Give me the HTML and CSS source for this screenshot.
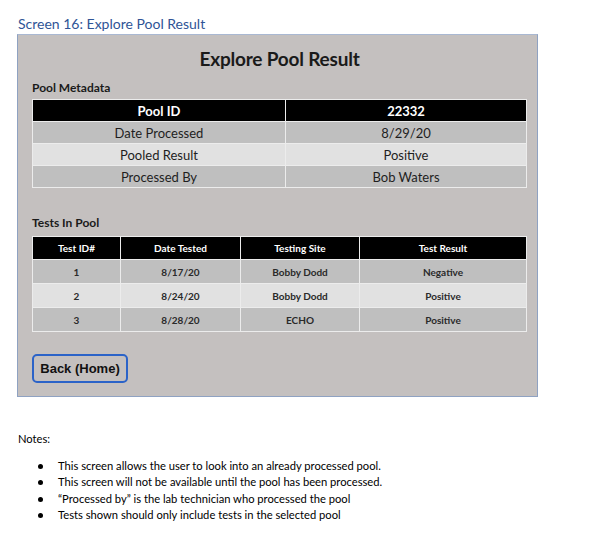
FILE: index.html
```html
<!DOCTYPE html>
<html>
<head>
<meta charset="utf-8">
<link rel="stylesheet" href="styles.css">
</head>
<body>
<h2 class="doc-heading">Screen 16: Explore Pool Result</h2>
<div class="frame">
  <h1 class="screen-title">Explore Pool Result</h1>
  <div class="section-label">Pool Metadata</div>
  <table class="meta">
    <colgroup><col class="mc1"><col class="mc2"></colgroup>
    <tr class="head"><td>Pool ID</td><td>22332</td></tr>
    <tr class="dark"><td>Date Processed</td><td>8/29/20</td></tr>
    <tr class="light"><td>Pooled Result</td><td>Positive</td></tr>
    <tr class="dark"><td>Processed By</td><td>Bob Waters</td></tr>
  </table>
  <div class="section-label tests-label">Tests In Pool</div>
  <table class="tests">
    <colgroup><col class="tc1"><col class="tc2"><col class="tc3"><col class="tc4"></colgroup>
    <tr class="head"><td>Test ID#</td><td>Date Tested</td><td>Testing Site</td><td>Test Result</td></tr>
    <tr class="dark"><td>1</td><td>8/17/20</td><td>Bobby Dodd</td><td>Negative</td></tr>
    <tr class="light"><td>2</td><td>8/24/20</td><td>Bobby Dodd</td><td>Positive</td></tr>
    <tr class="dark"><td>3</td><td>8/28/20</td><td>ECHO</td><td>Positive</td></tr>
  </table>
  <button class="back-btn">Back (Home)</button>
</div>
<div class="notes">
  <p class="notes-title">Notes:</p>
  <ul class="notes-list">
    <li>This screen allows the user to look into an already processed pool.</li>
    <li>This screen will not be available until the pool has been processed.</li>
    <li>“Processed by” is the lab technician who processed the pool</li>
    <li>Tests shown should only include tests in the selected pool</li>
  </ul>
</div>
</body>
</html>
```
FILE: styles.css
```css
html, body {
  margin: 0;
  padding: 0;
  background: #ffffff;
}
body {
  font-family: Lato, "Open Sans", "Liberation Sans", sans-serif;
  color: #000;
}
.doc-heading {
  margin: 0;
  padding: 15px 0 0 18px;
  height: 19px;
  font-size: 14px;
  font-weight: normal;
  line-height: 17px;
  color: #2f5496;
}
.frame {
  margin-left: 17px;
  height: 361px;
  border: 1px solid #8fa2c2;
  border-top-color: #a9b8d2;
  background: #c4c0bf;
  padding: 0 10px 0 14px;
  box-sizing: content-box;
  width: 495px;
}
.screen-title {
  margin: 0;
  padding-top: 12px;
  height: 34px;
  text-align: center;
  font-size: 19px;
  line-height: 23px;
  font-weight: bold;
  color: #1a1a1a;
  letter-spacing: -0.2px;
}
.section-label {
  font-size: 12px;
  font-weight: bold;
  line-height: 14px;
  height: 18px;
  color: #1a1a1a;
}
.tests-label {
  margin-top: 28px;
  height: 20px;
}
table {
  border-collapse: collapse;
  table-layout: fixed;
  width: 494px;
}
td {
  text-align: center;
  border: 1px solid #ececec;
  padding: 0;
}
.meta td {
  height: 21px;
  font-size: 13px;
  color: #1e1e1e;
}
.meta .head td {
  font-weight: bold;
  color: #fff;
}
.head td {
  background: #000;
}
.head td + td {
  border-left-color: #d8d8d8;
}
.dark td {
  background: #bfbfbf;
}
.light td {
  background: #e1e1e1;
}
.mc1 { width: 253px; }
.mc2 { width: 241px; }
.tests td {
  height: 23px;
  font-size: 10px;
  font-weight: bold;
  color: #2a2a2a;
}
.tests .head td {
  height: 22px;
  color: #fff;
}
.tc1 { width: 88px; }
.tc2 { width: 120px; }
.tc3 { width: 119px; }
.tc4 { width: 167px; }
.back-btn {
  display: block;
  margin-top: 22px;
  width: 96px;
  height: 29px;
  padding: 0;
  border: 2.5px solid #2b63c8;
  border-radius: 5px;
  background: #c4c0bf;
  font-family: "Liberation Sans", Arial, sans-serif;
  font-size: 13px;
  font-weight: bold;
  color: #111;
}
.notes {
  padding-left: 18px;
  font-size: 11.2px;
  line-height: 16.5px;
  color: #000;
}
.notes-title {
  margin: 0;
  padding-top: 34px;
}
.notes-list {
  margin: 10px 0 0 0;
  padding-left: 40px;
  list-style: none;
}
.notes-list li {
  position: relative;
}
.notes-list li::before {
  content: "";
  position: absolute;
  left: -20px;
  top: 6px;
  width: 5px;
  height: 5px;
  border-radius: 50%;
  background: #000;
}
```
